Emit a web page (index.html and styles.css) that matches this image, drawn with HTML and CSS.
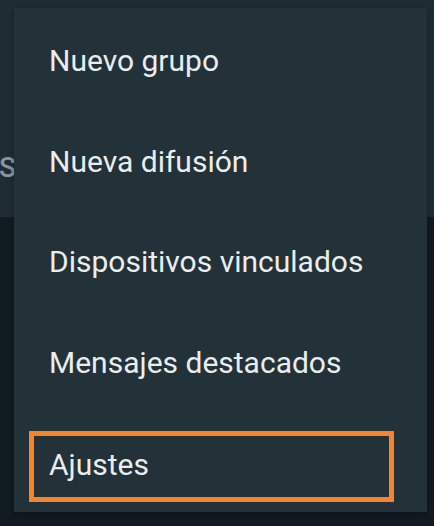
FILE: index.html
```html
<!DOCTYPE html>
<html lang="es">
<head>
<meta charset="utf-8">
<title>Menú</title>
<link rel="stylesheet" href="styles.css">
</head>
<body>
<div class="screen">
  <header class="appbar">
    <div class="tabs">
      <span class="tab">CHATS</span>
    </div>
  </header>
  <main class="content"></main>
  <nav class="menu">
    <div class="item">Nuevo grupo</div>
    <div class="item">Nueva difusión</div>
    <div class="item">Dispositivos vinculados</div>
    <div class="item">Mensajes destacados</div>
    <div class="item item--selected"><span class="label">Ajustes</span></div>
  </nav>
</div>
</body>
</html>
```
FILE: styles.css
```css
html, body {
  margin: 0;
  padding: 0;
  background: #111b21;
}
.screen {
  position: relative;
  width: 434px;
  height: 526px;
  overflow: hidden;
  font-family: Roboto, "Noto Sans", sans-serif;
}
.appbar {
  height: 217px;
  background: #1f2c34;
  display: flex;
  flex-direction: column;
  justify-content: flex-end;
}
.tabs {
  height: 112px;
  display: flex;
  justify-content: flex-end;
  width: 16px;
  overflow: visible;
}
.tab {
  display: block;
  font-size: 28px;
  font-weight: 500;
  color: #8696a0;
  line-height: 32px;
  margin-top: 47px;
  white-space: nowrap;
}
.content {
  height: 309px;
  background: #111b21;
}
.menu {
  position: absolute;
  top: 8px;
  left: 14px;
  width: 413px;
  height: 504px;
  background: #233138;
  display: flex;
  flex-direction: column;
  box-shadow: 0 2px 6px rgba(0,0,0,0.3);
}
.item {
  height: 100.8px;
  box-sizing: border-box;
  padding: 4px 0 0 35px;
  display: flex;
  align-items: center;
  font-size: 30px;
  color: #e9edef;
  white-space: nowrap;
}
.item--selected {
  padding: 10px 0 0 15px;
}
.item--selected .label {
  box-sizing: border-box;
  width: 365px;
  height: 71px;
  border: 5px solid #f5842f;
  padding: 0 0 5px 15px;
  display: flex;
  align-items: center;
}
```
